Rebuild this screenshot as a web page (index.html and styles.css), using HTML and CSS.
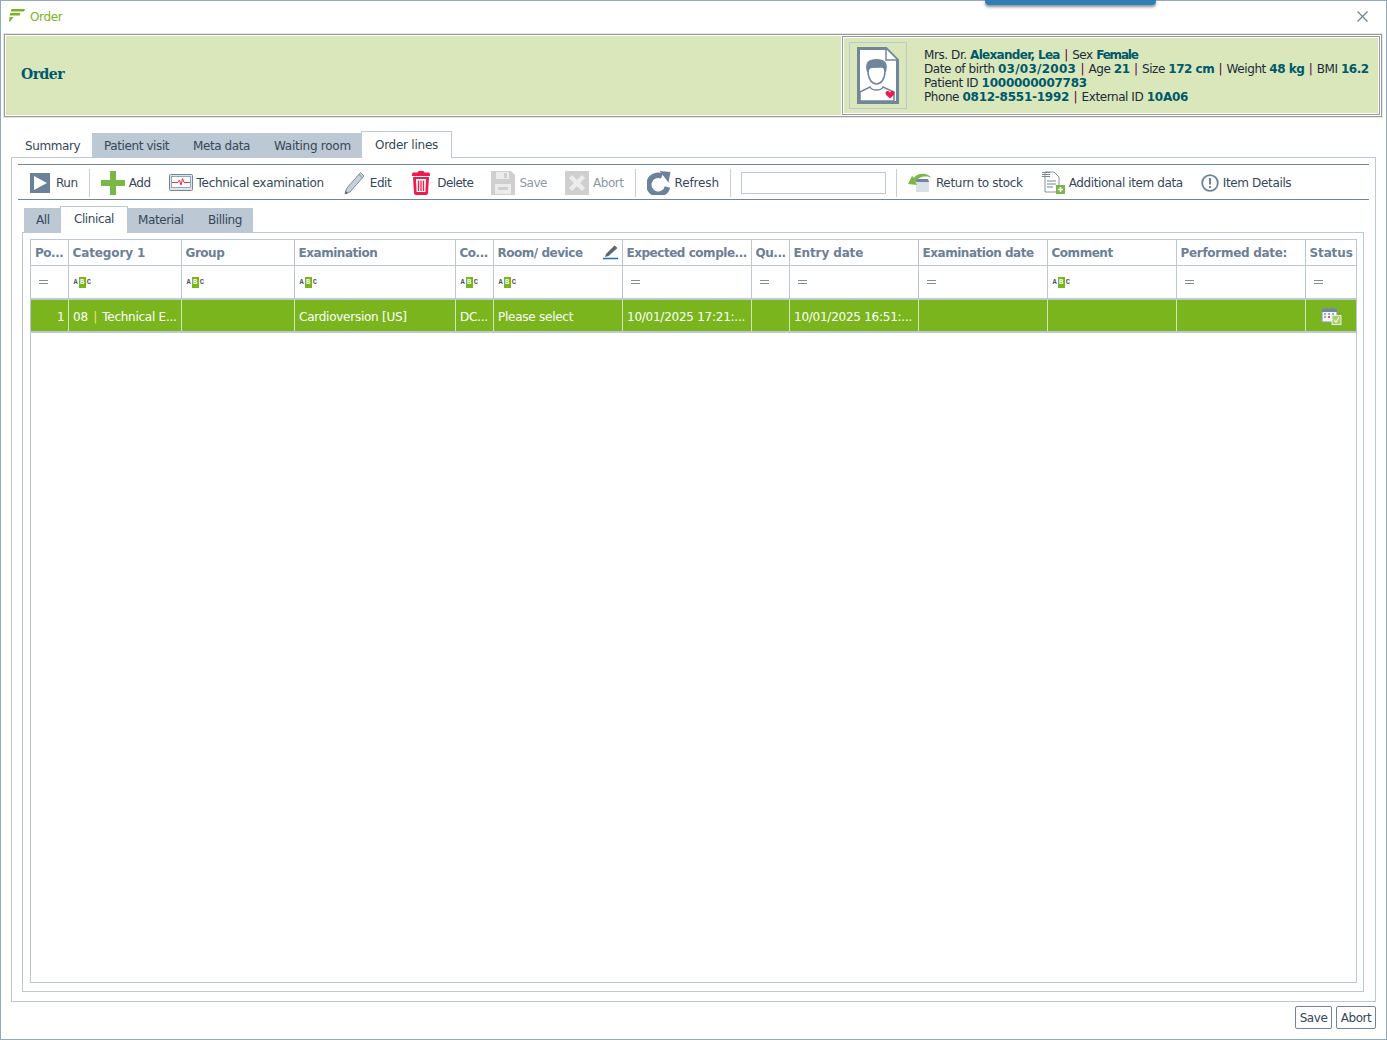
FILE: index.html
```html
<!DOCTYPE html>
<html lang="en">
<head>
    <meta charset="UTF-8">
    <meta name="viewport" content="width=device-width, initial-scale=1.0">
    <title>Order</title>
    <link rel="stylesheet" href="styles.css">
</head>
<body>
    <div class="window">
        <div class="notice-bar"></div>

        <!-- Title bar -->
        <div class="titlebar">
            <svg class="app-logo" viewBox="0 0 16 13" width="16" height="13">
                <path d="M2.500 0 H16 L15 2.500 H1.600 Z" fill="#7ab51d"/>
                <path d="M1.200 4 H11.500 L10.600 6.500 H.7 Z" fill="#7ab51d"/>
                <path d="M.6 8 H4.500 L1 12.500 H0 Z" fill="#7ab51d"/>
            </svg>
            <span class="title-text">Order</span>
            <svg class="close-icon" viewBox="0 0 11 11" width="11" height="11">
                <path d="M.5 .5 L10.500 10.500 M10.500 .5 L.5 10.500" stroke="#6f8294" stroke-width="1.200" fill="none"/>
            </svg>
        </div>

        <!-- Patient header -->
        <div class="banner">
            <div class="banner-title">Order</div>
            <div class="patient">
                <div class="patient-photo">
                    <svg viewBox="0 0 42 57" width="42" height="57">
                        <path d="M1.500 1.500 H29 L40.500 13 V55.500 H1.500 Z" fill="#fff" stroke="#71869b" stroke-width="3"/>
                        <path d="M29 2 V13 H40" fill="#fff" stroke="#71869b" stroke-width="1.500"/>
                        <path d="M3 54 V45 L13 40 C15 44 24 44 26 40 L37 45 V54 Z" fill="#fff" stroke="#71869b" stroke-width="1.500"/>
                        <path d="M11 24 C11 32 15 37 19.500 37 C24 37 28 32 28 24 L27 20 H12 Z" fill="#fff" stroke="#71869b" stroke-width="1.500"/>
                        <path d="M10 25 C7 15 12 12 19.500 12 C27 12 32 15 29 25 L27.500 25 C28 22 26 20 23 20 C19 21 15 20 12.500 22 L11.500 25 Z" fill="#71869b"/>
                        <path d="M33 45.500 C31.500 43.200 28.500 43.800 28.500 46.300 C28.500 48.300 31.500 50 33 51.500 C34.500 50 37.500 48.300 37.500 46.300 C37.500 43.800 34.500 43.200 33 45.500 Z" fill="#ee1c4e"/>
                    </svg>
                </div>
                <div class="patient-info">
                    <div>Mrs. Dr. <b class="name">Alexander, Lea</b> <i>|</i> Sex <b class="tight">Female</b></div>
                    <div>Date of birth <b class="wide">03/03/2003</b> <i>|</i> Age <b>21</b> <i>|</i> Size <b>172 cm</b> <i>|</i> Weight <b>48 kg</b> <i>|</i> BMI <b>16.2</b></div>
                    <div>Patient ID <b class="digits">1000000007783</b></div>
                    <div>Phone <b class="digits">0812-8551-1992</b> <i>|</i> External ID <b class="digits">10A06</b></div>
                </div>
            </div>
        </div>

        <!-- Main tabs -->
        <div class="tabs main-tabs">
            <div class="tab first">Summary</div>
            <div class="tab tab-visit">Patient visit</div>
            <div class="tab tab-meta">Meta data</div>
            <div class="tab tab-waiting">Waiting room</div>
            <div class="tab active">Order lines</div>
        </div>

        <div class="panel">
            <div class="toolbar">
                <div class="tool tool-run">
                    <svg viewBox="0 0 20 20" width="20" height="20"><rect width="20" height="20" fill="#6c8298"/><path d="M4 3 L17 10 L4 17 Z" fill="#fff"/></svg>
                    Run
                </div>
                <div class="sep"></div>
                <div class="tool tool-add">
                    <svg viewBox="0 0 24 24" width="24" height="24"><path d="M9 0 H15 V9 H24 V15 H15 V24 H9 V15 H0 V9 H9 Z" fill="#7ab648"/></svg>
                    Add
                </div>
                <div class="tool tool-tech">
                    <svg viewBox="0 0 24 17" width="24" height="17"><rect x=".5" y=".5" width="23" height="16" rx="1" fill="#dfe5eb" stroke="#71869b"/><rect x="2.500" y="2.500" width="19" height="11" fill="#fff" stroke="#71869b" stroke-width=".7"/><path d="M3 8.500 H9 L10.500 6 L12 11 L13.500 4.500 L15 8.500 H21" fill="none" stroke="#e8314f" stroke-width="1"/></svg>
                    Technical examination
                </div>
                <div class="tool tool-edit">
                    <svg viewBox="0 0 22 24" width="22" height="24"><path d="M16.500 1.500 L20 5 L6 21 L1 23 L2.500 17.500 Z" fill="#c7d0d9" stroke="#7c8e9f" stroke-width="1"/><path d="M15 3.500 L18.500 7" stroke="#7c8e9f" fill="none"/><path d="M1 23 L1.700 20 L3.800 22 Z" fill="#4f6070"/></svg>
                    Edit
                </div>
                <div class="tool tool-delete">
                    <svg viewBox="0 0 18 24" width="18" height="24"><path d="M5.500 1.500 Q5.500 0 7 0 H11 Q12.500 0 12.500 1.500 H17 Q18 1.500 18 5 H0 Q0 1.500 1 1.500 Z" fill="#ee1c4e"/><path d="M1 6 H17 L16 22 Q16 24 14 24 H4 Q2 24 2 22 Z" fill="#ee1c4e"/><path d="M4 8 H14 L13.400 21 H4.600 Z" fill="#fff"/><path d="M6.500 9.500 V20 M9 9.500 V20 M11.500 9.500 V20" stroke="#ee1c4e" stroke-width="1.300"/></svg>
                    Delete
                </div>
                <div class="tool tool-save disabled">
                    <svg viewBox="0 0 24 24" width="24" height="24"><path d="M0 0 H20 L24 4 V24 H0 Z" fill="#cfcfcf"/><rect x="5" y="1" width="13" height="7" fill="#ececec"/><rect x="13" y="2" width="3" height="5" fill="#cfcfcf"/><rect x="4" y="13" width="16" height="10" fill="#ececec"/><rect x="7" y="16" width="10" height="3" fill="#cfcfcf"/></svg>
                    Save
                </div>
                <div class="tool tool-abort disabled">
                    <svg viewBox="0 0 24 24" width="24" height="24"><rect width="24" height="24" fill="#cfcfcf"/><path d="M5.500 5.500 L18.500 18.500 M18.500 5.500 L5.500 18.500" stroke="#ececec" stroke-width="4.500"/></svg>
                    Abort
                </div>
                <div class="sep"></div>
                <div class="tool tool-refresh">
                    <svg viewBox="0 0 24 24" width="24" height="24"><path d="M20.500 16 A9.500 9.500 0 1 1 15 5" fill="none" stroke="#6c8298" stroke-width="5.500"/><path d="M12.500 0 L23.500 1 L21.500 11.500 Z" fill="#6c8298"/></svg>
                    Refresh
                </div>
                <div class="sep"></div>
                <input class="search" type="text">
                <div class="sep"></div>
                <div class="tool tool-return">
                    <svg viewBox="0 0 25 19" width="25" height="19"><path d="M9 8 H22 V19 H9 Z" fill="#d8e0e8"/><path d="M9 6 H21 L22 9 H9 Z" fill="#71869b"/><path d="M24.500 5 C20 -1 10 0 7 5 L5 3 L1 11 L10 12 L8.500 9 C11 4 19 2 24.500 5 Z" fill="#7ab648"/></svg>
                    Return to stock
                </div>
                <div class="tool tool-additional">
                    <svg viewBox="0 0 24 23" width="24" height="23"><path d="M4 1 H13 L18 6 V21 H4 Z" fill="#fff" stroke="#8597a8"/><path d="M1 1.500 H9 M1 3.500 H9 M1 5.500 H9" stroke="#71869b"/><path d="M6 10 H15 M6 13 H15 M6 16 H12" stroke="#71869b"/><rect x="15" y="14" width="9" height="9" fill="#7ab648"/><path d="M19.500 16 V21 M17 18.500 H22" stroke="#fff" stroke-width="1.500"/></svg>
                    Additional item data
                </div>
                <div class="tool tool-details">
                    <svg viewBox="0 0 18 18" width="18" height="18"><circle cx="9" cy="9" r="7.800" fill="#fff" stroke="#6c8298" stroke-width="1.800"/><path d="M9 4 V10.500 M9 12 V14" stroke="#6c8298" stroke-width="2"/></svg>
                    Item Details
                </div>
            </div>

            <!-- Sub tabs -->
            <div class="tabs sub-tabs">
                <div class="tab tab-all">All</div>
                <div class="tab active">Clinical</div>
                <div class="tab tab-material">Material</div>
                <div class="tab tab-billing">Billing</div>
            </div>

            <div class="subpanel">
                <div class="grid">
                    <table class="grid-table">
                        <colgroup>
                            <col class="c-pos"><col class="c-cat"><col class="c-group"><col class="c-exam"><col class="c-co"><col class="c-room"><col class="c-exp"><col class="c-qu"><col class="c-entry"><col class="c-examdate"><col class="c-comment"><col class="c-perf"><col class="c-status">
                        </colgroup>
                        <tr class="head">
                            <th>Po...</th>
                            <th class="h-wide">Category 1</th>
                            <th>Group</th>
                            <th>Examination</th>
                            <th>Co...</th>
                            <th class="room-head">Room/ device
                                <svg class="room-pen" viewBox="0 0 15 15" width="15" height="15"><path d="M11.500 .5 L14.500 3 L5.500 11 L2 12 L3 9 Z" fill="#5b6670"/><path d="M0 13.500 H15" stroke="#1b6fc2" stroke-width="1.500"/></svg>
                            </th>
                            <th>Expected comple...</th>
                            <th>Qu...</th>
                            <th class="h-wide">Entry date</th>
                            <th>Examination date</th>
                            <th>Comment</th>
                            <th class="h-perf">Performed date:</th>
                            <th class="h-wide">Status</th>
                        </tr>
                        <tr class="filter">
                            <td><span class="eq"></span></td>
                            <td><span class="abc">A<u>B</u>C</span></td>
                            <td><span class="abc">A<u>B</u>C</span></td>
                            <td><span class="abc">A<u>B</u>C</span></td>
                            <td><span class="abc">A<u>B</u>C</span></td>
                            <td><span class="abc">A<u>B</u>C</span></td>
                            <td><span class="eq"></span></td>
                            <td><span class="eq"></span></td>
                            <td><span class="eq"></span></td>
                            <td><span class="eq"></span></td>
                            <td><span class="abc">A<u>B</u>C</span></td>
                            <td><span class="eq"></span></td>
                            <td><span class="eq"></span></td>
                        </tr>
                        <tr class="row">
                            <td class="num">1</td>
                            <td>08 <em>|</em> Technical E...</td>
                            <td></td>
                            <td>Cardioversion [US]</td>
                            <td>DC...</td>
                            <td>Please select</td>
                            <td>10/01/2025 17:21:...</td>
                            <td></td>
                            <td>10/01/2025 16:51:...</td>
                            <td></td>
                            <td></td>
                            <td></td>
                            <td class="status-cell">
                                <svg viewBox="0 0 21 18" width="21" height="18"><rect x="1" y="2" width="15" height="13" fill="#f2f4f6" stroke="#8597a8"/><rect x="1" y="2" width="15" height="3" fill="#71869b"/><path d="M3 .5 V3 M6 .5 V3 M9 .5 V3 M12 .5 V3" stroke="#71869b"/><path d="M3 7 H5 M7 7 H9 M11 7 H13 M3 10 H5 M11 10 H13" stroke="#8597a8" stroke-width="1.500"/><path d="M7 10 H9" stroke="#ee1c4e" stroke-width="1.500"/><rect x="11" y="8.500" width="9" height="9" fill="#a8cf6a" stroke="#e6edf2"/><path d="M13 12.500 L15 15.500 L18 10" fill="none" stroke="#fff"/></svg>
                            </td>
                        </tr>
                    </table>
                </div>
            </div>
        </div>

        <div class="footer">
            <button class="btn btn-save">Save</button>
            <button class="btn btn-abort">Abort</button>
        </div>
    </div>
</body>
</html>
```

FILE: styles.css
```css
* {
    box-sizing: border-box;
}

body {
    margin: 0;
    font-family: "DejaVu Sans", sans-serif;
    font-size: 12px;
    color: #2b3a4a;
    background-color: #fff;
    overflow: hidden;
}

.window {
    position: relative;
    height: 1040px;
    border: 1px solid #92a9c0;
    display: flex;
    flex-direction: column;
}

.notice-bar {
    position: absolute;
    top: -1px;
    left: 984px;
    width: 171px;
    height: 5px;
    background-color: #2f7fb5;
    border-radius: 0 0 4px 4px;
    box-shadow: 0 2px 3px rgba(40, 50, 60, .55);
}

/* title bar */
.titlebar {
    height: 33px;
    flex: none;
    display: flex;
    align-items: center;
    padding: 0 18px 2px 8px;
}

.app-logo {
    margin-top: -3px;
}

.title-text {
    margin-left: 5px;
    color: #7ab51d;
    letter-spacing: -.35px;
}

.close-icon {
    margin-left: auto;
}

/* header */
.banner {
    flex: none;
    height: 83px;
    margin: 0 4px 0 3px;
    background-color: #d9e7bb;
    border: 1px solid #9a9a9a;
    outline: 1px solid #e6e6e6;
    box-shadow: inset 0 0 0 1px #fff;
    padding: 2px;
    display: flex;
    align-items: stretch;
    justify-content: space-between;
}

.banner-title {
    align-self: center;
    margin: 0 0 4px 14px;
    font-size: 14px;
    font-weight: bold;
    font-family: "DejaVu Serif", serif;
    color: #00596a;
    letter-spacing: -.5px;
}

.patient {
    width: 538px;
    margin: -1px;
    border: 1px solid #9a9a9a;
    box-shadow: -1px 0 0 #fff, inset 0 0 0 1px #fff;
    display: flex;
    align-items: center;
    padding-left: 6px;
}

.patient-photo {
    width: 58px;
    height: 67px;
    border: 1px solid #bcc8d6;
    display: flex;
    align-items: center;
    justify-content: center;
    flex: none;
}

.patient-info {
    margin-left: 17px;
    line-height: 14px;
    color: #1c2b3a;
    white-space: nowrap;
    letter-spacing: -.42px;
}

.patient-info b {
    color: #00596a;
    font-weight: bold;
    letter-spacing: -.5px;
}

.patient-info b.name {
    letter-spacing: -.7px;
}

.patient-info b.wide {
    letter-spacing: .25px;
}

.patient-info b.tight {
    letter-spacing: -1.200px;
}

.patient-info b.digits {
    letter-spacing: -.25px;
}

.patient-info i {
    font-style: normal;
    color: #5a0040;
    margin: 0 1px;
}

/* tabs */
.tabs {
    flex: none;
    display: flex;
    align-items: flex-end;
    white-space: nowrap;
    letter-spacing: -.4px;
}

.tab {
    height: 24px;
    line-height: 26px;
    background-color: #bcc8d3;
    color: #36475a;
    padding-left: 12px;
}

.tab.active {
    background-color: #fff;
    border: 1px solid #bcc8d6;
    border-bottom: 0;
    height: 27px;
    line-height: 27px;
    padding: 0;
    text-align: center;
    position: relative;
    z-index: 1;
    margin-bottom: -1px;
}

.main-tabs {
    height: 26px;
    margin-top: 14px;
    padding-left: 10px;
}

.main-tabs .tab.first {
    width: 81px;
    background-color: #fff;
    padding-left: 14px;
}

.tab-visit {
    width: 89px;
}

.tab-meta {
    width: 81px;
}

.tab-waiting {
    width: 99px;
    letter-spacing: -.25px;
}

.main-tabs .tab.active {
    width: 91px;
    letter-spacing: -.25px;
}

.panel {
    flex: 1;
    margin: 0 10px;
    border: 1px solid #bcc8d6;
    display: flex;
    flex-direction: column;
    padding: 6px 6px 9px 6px;
    min-height: 0;
}

/* toolbar */
.toolbar {
    flex: none;
    height: 36px;
    border-top: 1px solid #71869b;
    border-bottom: 1px solid #71869b;
    display: flex;
    align-items: center;
    padding: 1px 0 0 12px;
    white-space: nowrap;
    letter-spacing: -.45px;
    color: #36475a;
}

.tool {
    display: flex;
    align-items: center;
    gap: 4px;
}

.tool.disabled {
    color: #8d99a5;
}

.sep {
    width: 1px;
    height: 28px;
    background-color: #c5ced7;
    flex: none;
}

.tool-run {
    gap: 6px;
    margin-right: 11px;
}

.tool-add {
    margin-left: 11px;
}

.tool-tech {
    margin-left: 18px;
    letter-spacing: -.3px;
}

.tool-edit {
    margin-left: 20px;
}

.tool-delete {
    margin-left: 21px;
    gap: 7px;
    letter-spacing: -.55px;
}

.tool-save {
    margin-left: 18px;
}

.tool-abort {
    margin-left: 18px;
}

.tool-abort + .sep {
    margin-left: 11px;
}

.tool-refresh {
    margin-left: 11px;
    letter-spacing: -.15px;
}

.tool-refresh + .sep {
    margin-left: 11px;
}

.search {
    width: 145px;
    height: 22px;
    margin: 0 10px;
    border: 1px solid #bcc8d6;
    background-color: #fff;
    padding: 0;
}

.tool-return {
    margin-left: 10px;
    letter-spacing: -.3px;
}

.tool-additional {
    margin-left: 18px;
    letter-spacing: -.4px;
}

.tool-details {
    margin-left: 18px;
    letter-spacing: -.35px;
}

/* sub tabs */
.sub-tabs {
    height: 32px;
    padding-left: 6px;
}

.sub-tabs .tab {
    line-height: 24px;
}

.sub-tabs .tab.tab-all {
    width: 36px;
}

.sub-tabs .tab.active {
    width: 68px;
    line-height: 25px;
}

.tab-material {
    width: 68px;
    padding-left: 10px;
}

.tab-billing {
    width: 57px;
}

.subpanel {
    flex: 1;
    margin: 0 5px 0 4px;
    border: 1px solid #bcc8d6;
    padding: 6px 6px 8px 7px;
    min-height: 0;
}

/* grid */
.grid {
    height: 100%;
    border: 1px solid #bcc8d6;
    overflow: hidden;
}

.grid-table {
    table-layout: fixed;
    border-collapse: collapse;
    width: 1325px;
}

.c-pos { width: 37px; }
.c-cat, .c-group { width: 113px; }
.c-exam { width: 161px; }
.c-co, .c-qu { width: 38px; }
.c-room, .c-exp, .c-entry, .c-examdate, .c-comment, .c-perf { width: 129px; }
.c-status { width: 51px; }

.grid-table th,
.grid-table td {
    border-left: 1px solid #bcc8d6;
    padding: 0 4px;
    overflow: hidden;
    white-space: nowrap;
    text-align: left;
}

.grid-table th:first-child,
.grid-table td:first-child {
    border-left: 0;
}

.grid-table .head th {
    height: 25px;
    padding-top: 2px;
    color: #6c8097;
    font-size: 12px;
    letter-spacing: -.47px;
    border-bottom: 1px solid #bcc8d6;
}

.grid-table .head th.h-wide {
    letter-spacing: -.12px;
}

.grid-table .head th.h-perf {
    letter-spacing: -.3px;
}

.room-head {
    position: relative;
}

.room-pen {
    position: absolute;
    right: 4px;
    top: 5px;
}

.grid-table .filter td {
    height: 34px;
    border-bottom: 2px solid #bcc8d6;
    padding: 1px 0 0 5px;
}

.eq {
    display: block;
    width: 9px;
    margin-left: 3px;
    height: 4px;
    border-top: 1px solid #7f8c99;
    border-bottom: 1px solid #7f8c99;
}

.abc {
    display: block;
    font-family: "Liberation Mono", monospace;
    font-size: 7px;
    font-weight: bold;
    line-height: 11px;
    color: #4a5560;
    letter-spacing: 0;
}

.abc u {
    display: inline-block;
    text-decoration: none;
    background-color: #7ab51d;
    color: #fff;
    width: 7px;
    margin: 0 1px;
    text-align: center;
}

.grid-table .row td {
    height: 33px;
    padding: 2px 4px 0 4.500px;
    background-color: #7ab51d;
    color: #fff;
    border-bottom: 2px solid #bcc8d6;
    border-left-color: #d5e3b8;
    letter-spacing: -.25px;
}

.grid-table .row td.num {
    text-align: right;
    padding-right: 3px;
}

.row em {
    font-style: normal;
    color: #f2e35a;
    margin: 0 1.500px 0 2px;
}

.grid-table .row .status-cell {
    padding: 0 0 0 1px;
}

.status-cell svg {
    display: block;
    margin: 0 auto;
}

/* footer */
.footer {
    flex: none;
    height: 37px;
    display: flex;
    justify-content: flex-end;
    align-items: flex-start;
    gap: 4px;
    padding: 4px 10px 0 0;
}

.btn {
    height: 23px;
    padding: 0;
    font-family: inherit;
    font-size: 12px;
    letter-spacing: -.45px;
    color: #36475a;
    background-color: #fff;
    border: 1px solid #71869b;
    border-radius: 2px;
}

.btn-save {
    width: 37px;
}

.btn-abort {
    width: 40px;
}
```
